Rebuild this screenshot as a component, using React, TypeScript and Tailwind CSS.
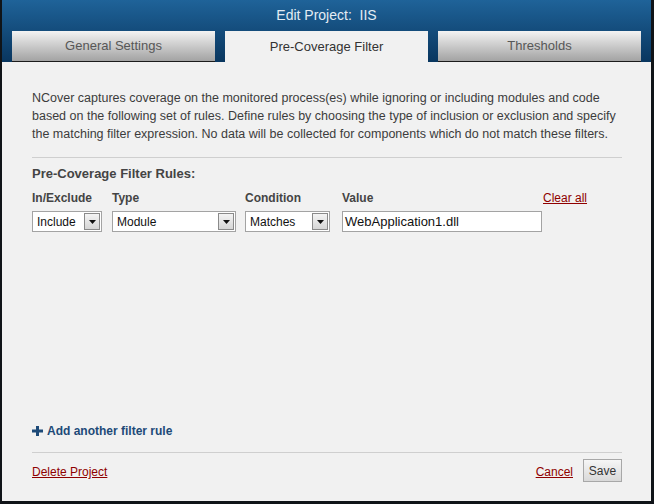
import React from "react";

const font = { fontFamily: '"Liberation Sans", Arial, sans-serif' };

const Select = ({ value, width }: { value: string; width: string }) => (
  <div className={`${width} h-[21px] bg-white border border-[#a3a3a3] flex items-center justify-between pl-[4px] pr-px`}>
    <span className="text-[12px] text-[#111] leading-none">{value}</span>
    <span className="w-[16px] h-[17px] border border-[#8a8a8a] bg-gradient-to-b from-[#f4f4f4] to-[#d6d6d6] flex items-center justify-center">
      <svg width="7" height="4" viewBox="0 0 7 4">
        <path d="M0 0h7L3.5 4z" fill="#111" />
      </svg>
    </span>
  </div>
);

const tabs = [
  { name: "General Settings", active: false },
  { name: "Pre-Coverage Filter", active: true },
  { name: "Thresholds", active: false },
];

export default function App() {
  return (
    <div
      className="w-[654px] h-[504px] flex flex-col border-l-2 border-r-[3px] border-b-[3px] border-[#101418] bg-[#f1f1f1]"
      style={font}
    >
      <div className="h-[62px] bg-gradient-to-b from-[#1f6399] to-[#09365f] flex flex-col">
        <div className="h-[31px] flex items-center justify-center text-[14px] text-[#e4ecf4]">
          Edit Project:&nbsp;&nbsp;IIS
        </div>
        <div className="h-[31px] grid grid-cols-3 gap-[10px] px-[10px]">
          {tabs.map((t) =>
            t.active ? (
              <div key={t.name} className="bg-[#f1f1f1] flex items-center justify-center text-[13px] text-[#333]">
                {t.name}
              </div>
            ) : (
              <div
                key={t.name}
                className="bg-gradient-to-b from-[#f3f3f3] to-[#a3a3a3] border-b border-[#1c1c1c] flex items-center justify-center text-[13px] text-[#575757]"
              >
                {t.name}
              </div>
            )
          )}
        </div>
      </div>

      <div className="flex-1 flex flex-col pl-[30px] pr-[29px] pt-[27px] pb-[19px]">
        <p className="text-[12.5px] leading-[18px] text-[#3c3c3c] whitespace-nowrap">
          NCover captures coverage on the monitored process(es) while ignoring or including modules and code
          <br />
          based on the following set of rules. Define rules by choosing the type of inclusion or exclusion and specify
          <br />
          the matching filter expression. No data will be collected for components which do not match these filters.
        </p>
        <div className="mt-[14px] border-t border-[#cfcfcf]" />
        <div className="mt-[8px] text-[13px] leading-[16px] font-bold text-[#444]">Pre-Coverage Filter Rules:</div>

        <div className="mt-[9px] flex">
          <div className="w-[80px] flex flex-col">
            <span className="text-[12px] leading-[14px] font-bold text-[#444]">In/Exclude</span>
            <div className="mt-[6px]">
              <Select value="Include" width="w-[70px]" />
            </div>
          </div>
          <div className="w-[133px] flex flex-col">
            <span className="text-[12px] leading-[14px] font-bold text-[#444]">Type</span>
            <div className="mt-[6px]">
              <Select value="Module" width="w-[124px]" />
            </div>
          </div>
          <div className="w-[97px] flex flex-col">
            <span className="text-[12px] leading-[14px] font-bold text-[#444]">Condition</span>
            <div className="mt-[6px]">
              <Select value="Matches" width="w-[85px]" />
            </div>
          </div>
          <div className="flex flex-col">
            <div className="flex">
              <span className="w-[201px] text-[12px] leading-[14px] font-bold text-[#444]">Value</span>
              <span className="text-[12px] leading-[14px] text-[#8f0000] underline">Clear all</span>
            </div>
            <div className="mt-[6px] w-[200px] h-[21px] bg-white border border-[#a3a3a3] flex items-center pl-[2px] text-[13px] text-[#111]">
              WebApplication1.dll
            </div>
          </div>
        </div>

        <div className="flex-1" />

        <div className="flex items-center gap-[4px] text-[12px] font-bold text-[#1d4a78]">
          <svg width="11" height="10" viewBox="0 0 11 10">
            <path d="M4 0h3v3.5h4v3H7V10H4V6.5H0v-3h4z" fill="#1d4a78" />
          </svg>
          Add another filter rule
        </div>
        <div className="mt-[12px] border-t border-[#cfcfcf]" />
        <div className="mt-[6px] flex items-center justify-between">
          <span className="pt-[3px] text-[12px] text-[#8f0000] underline">Delete Project</span>
          <div className="flex items-center gap-[10px]">
            <span className="pt-[3px] text-[12px] text-[#8f0000] underline">Cancel</span>
            <button className="w-[39px] h-[23px] border border-[#a8a8a8] bg-gradient-to-b from-[#f6f6f6] to-[#d9d9d9] text-[12px] text-[#333]">
              Save
            </button>
          </div>
        </div>
      </div>
    </div>
  );
}
